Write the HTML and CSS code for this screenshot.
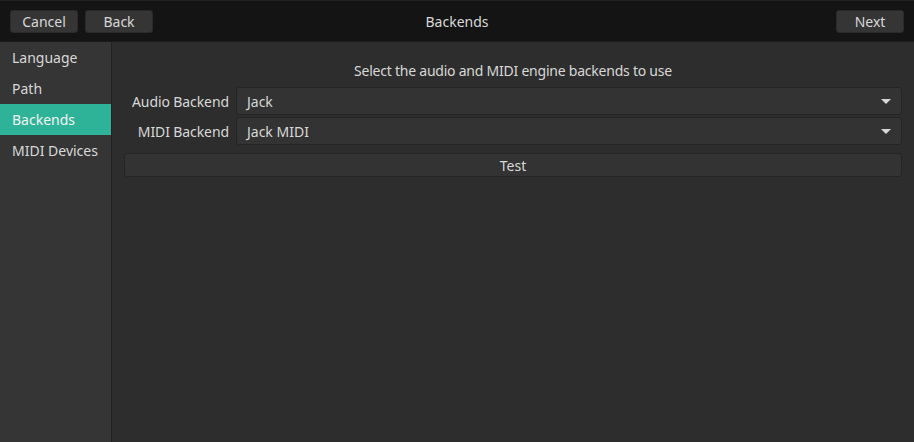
FILE: index.html
```html
<!DOCTYPE html>
<html>
<head>
<meta charset="utf-8">
<link rel="stylesheet" href="styles.css">
</head>
<body>
<div class="app">
  <header class="topbar">
    <div class="left">
      <button class="btn">Cancel</button>
      <button class="btn">Back</button>
    </div>
    <div class="title">Backends</div>
    <div class="right">
      <button class="btn">Next</button>
    </div>
  </header>
  <div class="body">
    <nav class="sidebar">
      <div class="item">Language</div>
      <div class="item">Path</div>
      <div class="item active">Backends</div>
      <div class="item">MIDI Devices</div>
    </nav>
    <main class="content">
      <div class="heading">Select the audio and MIDI engine backends to use</div>
      <div class="form">
        <label class="label">Audio Backend</label>
        <div class="combo"><span>Jack</span><span class="arrow"></span></div>
        <label class="label">MIDI Backend</label>
        <div class="combo"><span>Jack MIDI</span><span class="arrow"></span></div>
      </div>
      <button class="test">Test</button>
    </main>
  </div>
</div>
</body>
</html>
```
FILE: styles.css
```css
html, body {
  margin: 0;
  padding: 0;
  height: 100%;
}
body {
  font-family: "Noto Sans", "DejaVu Sans", sans-serif;
  font-size: 14px;
  color: #d8d8d8;
  background: #2d2d2d;
}
.app {
  display: flex;
  flex-direction: column;
  height: 100%;
}
.topbar {
  height: 41px;
  box-sizing: border-box;
  background: #141414;
  border-top: 1px solid #202020;
  display: grid;
  grid-template-columns: 1fr auto 1fr;
  align-items: center;
  padding: 0 10px;
}
.left { display: flex; gap: 7px; }
.right { display: flex; justify-content: flex-end; }
.title { color: #d8d8d8; }
.btn {
  font: inherit;
  color: #d8d8d8;
  background: #353535;
  border: 1px solid #2a2a2a;
  border-radius: 3px;
  width: 68px;
  height: 23px;
  padding: 0;
  margin-top: 0;
}
.body {
  flex: 1;
  display: flex;
  border-top: 1px solid #1c1c1c;
}
.sidebar {
  width: 111px;
  background: #353535;
  border-right: 1px solid #222;
  padding-top: 0;
}
.item {
  height: 31px;
  line-height: 31px;
  padding-left: 12px;
  white-space: nowrap;
}
.item.active {
  background: #2eb398;
  color: #f2f2f2;
}
.content {
  flex: 1;
  padding: 19px 12px 0 12px;
  display: flex;
  flex-direction: column;
}
.heading {
  text-align: center;
  height: 20px;
  line-height: 20px;
  margin-bottom: 6px;
  letter-spacing: -0.23px;
}
.form {
  display: grid;
  grid-template-columns: auto 1fr;
  column-gap: 7px;
  row-gap: 2px;
  align-items: center;
}
.label {
  text-align: right;
  padding-left: 8px;
  letter-spacing: -0.1px;
}
.combo {
  height: 28px;
  box-sizing: border-box;
  background: #333333;
  border: 1px solid #252525;
  border-radius: 3px;
  display: flex;
  align-items: center;
  justify-content: space-between;
  padding: 0 10px 0 10px;
}
.arrow {
  width: 0;
  height: 0;
  border-left: 5px solid transparent;
  border-right: 5px solid transparent;
  border-top: 5px solid #d8d8d8;
}
.test {
  margin-top: 8px;
  font: inherit;
  color: #d8d8d8;
  background: #333333;
  border: 1px solid #252525;
  border-radius: 3px;
  height: 24px;
  padding: 0;
}
```
